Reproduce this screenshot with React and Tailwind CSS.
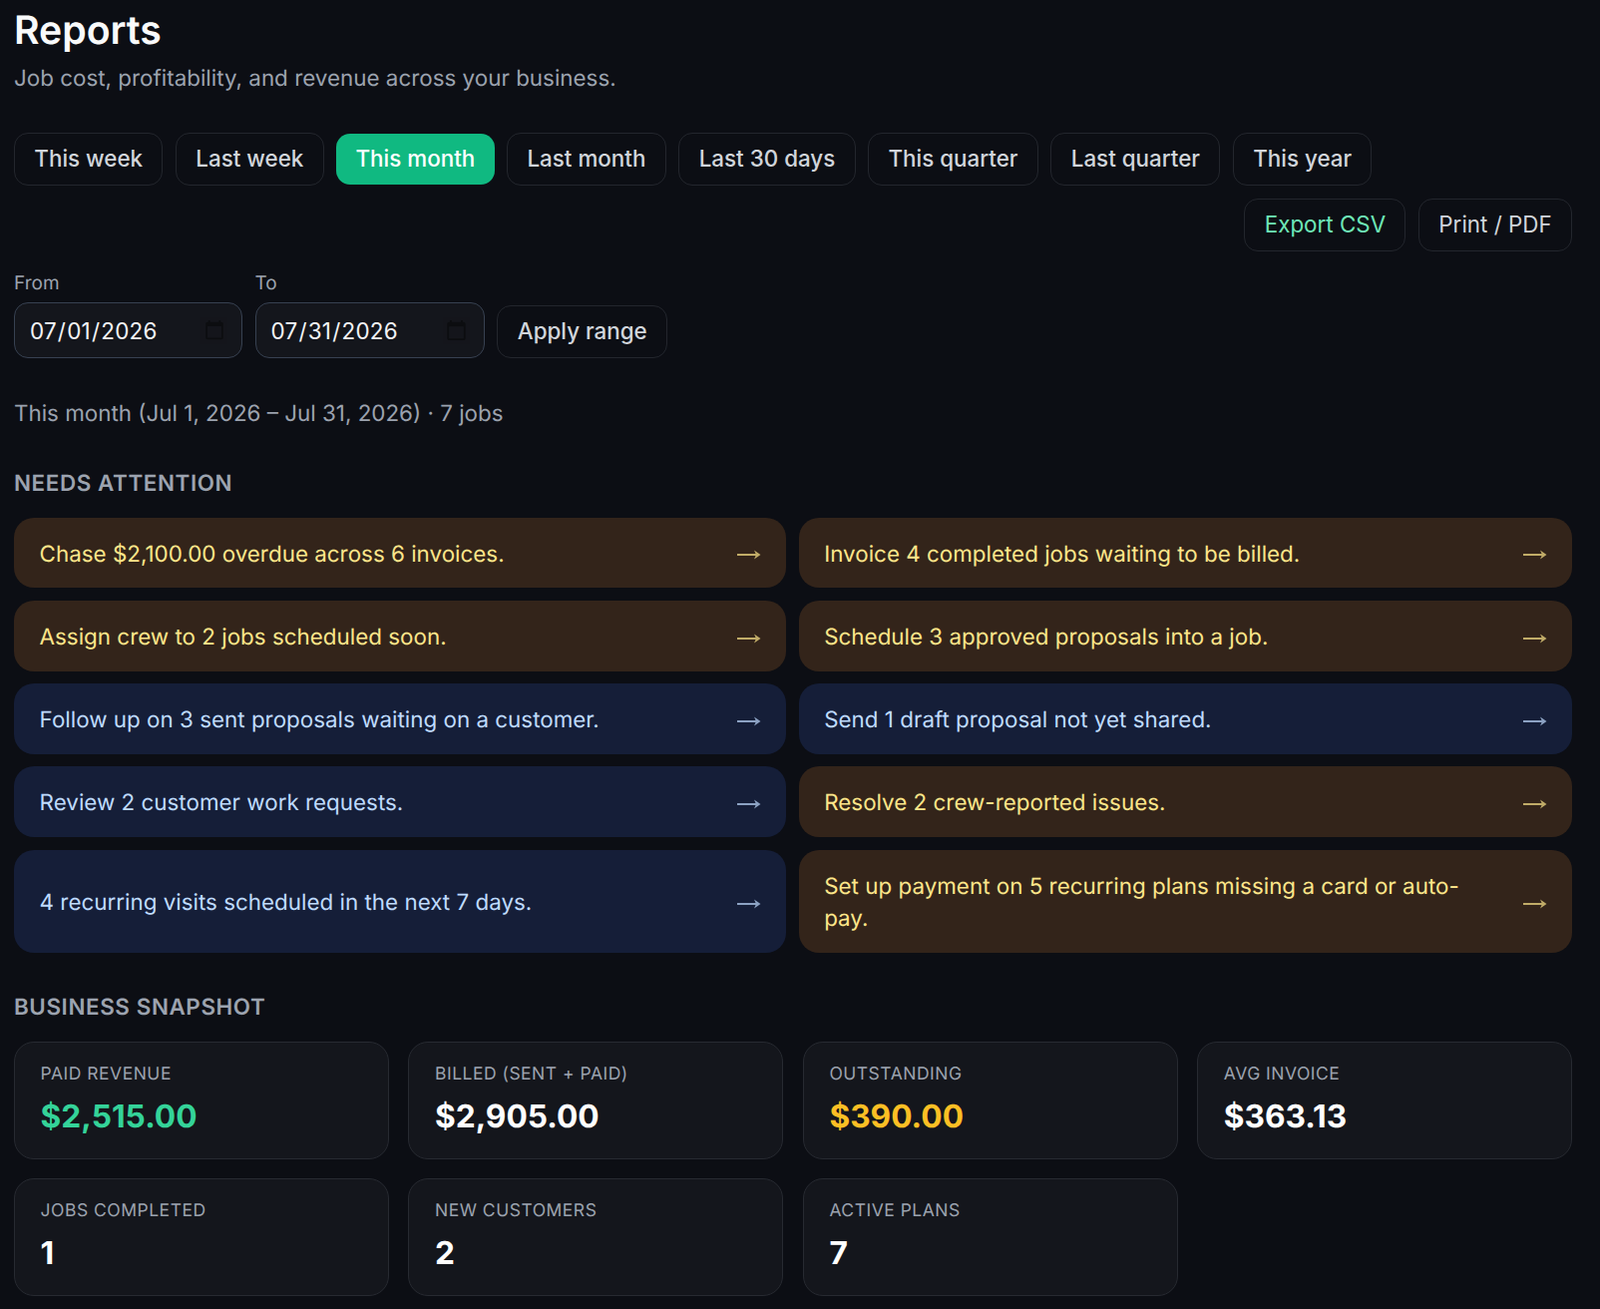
import React from 'react';

const presets = ['This week', 'Last week', 'This month', 'Last month', 'Last 30 days', 'This quarter', 'Last quarter', 'This year'];

const actions = [
  { text: 'Chase $2,100.00 overdue across 6 invoices.', tone: 'amber' },
  { text: 'Invoice 4 completed jobs waiting to be billed.', tone: 'amber' },
  { text: 'Assign crew to 2 jobs scheduled soon.', tone: 'amber' },
  { text: 'Schedule 3 approved proposals into a job.', tone: 'amber' },
  { text: 'Follow up on 3 sent proposals waiting on a customer.', tone: 'blue' },
  { text: 'Send 1 draft proposal not yet shared.', tone: 'blue' },
  { text: 'Review 2 customer work requests.', tone: 'blue' },
  { text: 'Resolve 2 crew-reported issues.', tone: 'amber' },
  { text: '4 recurring visits scheduled in the next 7 days.', tone: 'blue' },
  { text: 'Set up payment on 5 recurring plans missing a card or auto-pay.', tone: 'amber' },
];

const stats = [
  { label: 'Paid revenue', value: '$2,515.00', color: 'text-[#34d399]' },
  { label: 'Billed (sent + paid)', value: '$2,905.00', color: 'text-white' },
  { label: 'Outstanding', value: '$390.00', color: 'text-[#fbbf24]' },
  { label: 'Avg invoice', value: '$363.13', color: 'text-white' },
  { label: 'Jobs completed', value: '1', color: 'text-white' },
  { label: 'New customers', value: '2', color: 'text-white' },
  { label: 'Active plans', value: '7', color: 'text-white' },
];

const Arrow = () => (
  <svg width="24" height="12" viewBox="0 0 24 12" className="shrink-0 mt-[1px] opacity-70" fill="currentColor">
    <rect x="0" y="5" width="20" height="2" />
    <path d="M17 1.5 L23.5 6 L17 10.5 L19 6 Z" />
  </svg>
);

const App = () => {
  return (
    <div className="min-h-[1312px] bg-[#0c0e14] pl-[14px] pr-[28px] pt-[8px] pb-[13px] font-['Inter',sans-serif] [text-rendering:geometricPrecision] text-white overflow-hidden">
      <h1 className="text-[39.2px] leading-[46px] font-semibold text-[#f9fafb]">Reports</h1>
      <p className="mt-[9px] text-[22.4px] leading-[32px] text-[#9ca3af]">Job cost, profitability, and revenue across your business.</p>

      {/* RANGE BUTTONS */}
      <div className="mt-[38px] flex flex-wrap items-center gap-[12.6px]">
        {presets.map((p) => (
          <button
            key={p}
            className={p === 'This month'
              ? 'h-[51px] px-[19.3px] pb-[2px] rounded-[14px] bg-[#10b981] text-[22.4px] font-medium text-white'
              : 'h-[53px] px-[19.3px] pb-[2px] rounded-[14px] border border-[#23262d] text-[22.4px] font-medium text-[#d1d5db]'}
          >
            {p}
          </button>
        ))}
        <div className="ml-auto flex gap-[12.6px]">
          <button className="h-[53px] px-[19.3px] rounded-[14px] border border-[#23262d] text-[22.4px] text-[#6ee7b7]">Export CSV</button>
          <button className="h-[53px] px-[19.3px] rounded-[14px] border border-[#23262d] text-[22.4px] text-[#d1d5db]">Print / PDF</button>
        </div>
      </div>

      {/* CUSTOM RANGE */}
      <div className="mt-[19px] flex items-end gap-[12.6px]">
        <label className="block">
          <span className="block mb-[6px] text-[19px] leading-[26px] text-[#9ca3af]">From</span>
          <input type="date" defaultValue="2026-07-01" className="block h-[56px] w-[229px] px-[14px] pt-[2px] rounded-[14px] border border-[#374151] bg-[#14161c] text-[22.4px] tracking-[0.25px] text-[#f3f4f6] [&::-webkit-calendar-picker-indicator]:opacity-40" />
        </label>
        <label className="block">
          <span className="block mb-[6px] text-[19px] leading-[26px] text-[#9ca3af]">To</span>
          <input type="date" defaultValue="2026-07-31" className="block h-[56px] w-[230px] px-[14px] pt-[2px] rounded-[14px] border border-[#374151] bg-[#14161c] text-[22.4px] tracking-[0.25px] text-[#f3f4f6] [&::-webkit-calendar-picker-indicator]:opacity-40" />
        </label>
        <button className="h-[53px] px-[19.6px] rounded-[14px] border border-[#23262d] text-[22.4px] font-medium text-[#d1d5db]">Apply range</button>
      </div>

      <p className="mt-[40px] text-[22.4px] leading-[32px] text-[#9ca3af]">This month (Jul 1, 2026 – Jul 31, 2026) · 7 jobs</p>

      {/* NEEDS ATTENTION */}
      <h2 className="mt-[38px] text-[22.4px] leading-[32px] font-semibold tracking-[0.6px] uppercase text-[#9ca3af]">Needs attention</h2>
      <div className="mt-[18px] grid grid-cols-[774px_1fr] gap-[12.6px]">
        {actions.map((a) => (
          <a
            key={a.text}
            className={a.tone === 'amber'
              ? 'flex items-center justify-between gap-[25px] pl-[25.6px] pr-[25px] pt-[21px] pb-[17px] rounded-[20px] bg-[#33241a] text-[22.4px] leading-[32.7px] text-[#fde68a]'
              : 'flex items-center justify-between gap-[25px] pl-[25.6px] pr-[25px] pt-[21px] pb-[17px] rounded-[20px] bg-[#151e38] text-[22.4px] leading-[32.7px] text-[#bfdbfe]'}
          >
            <span>{a.text}</span>
            <Arrow />
          </a>
        ))}
      </div>

      {/* BUSINESS SNAPSHOT */}
      <h2 className="mt-[39px] text-[22.4px] leading-[32px] font-semibold tracking-[0.6px] uppercase text-[#9ca3af]">Business snapshot</h2>
      <div className="mt-[18px] grid grid-cols-4 gap-[19.6px]">
        {stats.map((s) => (
          <div key={s.label} className="h-[117.6px] px-[25.6px] pt-[19px] rounded-[20px] border border-[#272a31] bg-[#14161c]">
            <div className="text-[17.5px] leading-[26px] uppercase tracking-[0.5px] text-[#9ca3af]">{s.label}</div>
            <div className={`mt-[8px] text-[31.7px] leading-[42px] font-bold ${s.color}`}>{s.value}</div>
          </div>
        ))}
      </div>
    </div>
  );
};

export default App;
